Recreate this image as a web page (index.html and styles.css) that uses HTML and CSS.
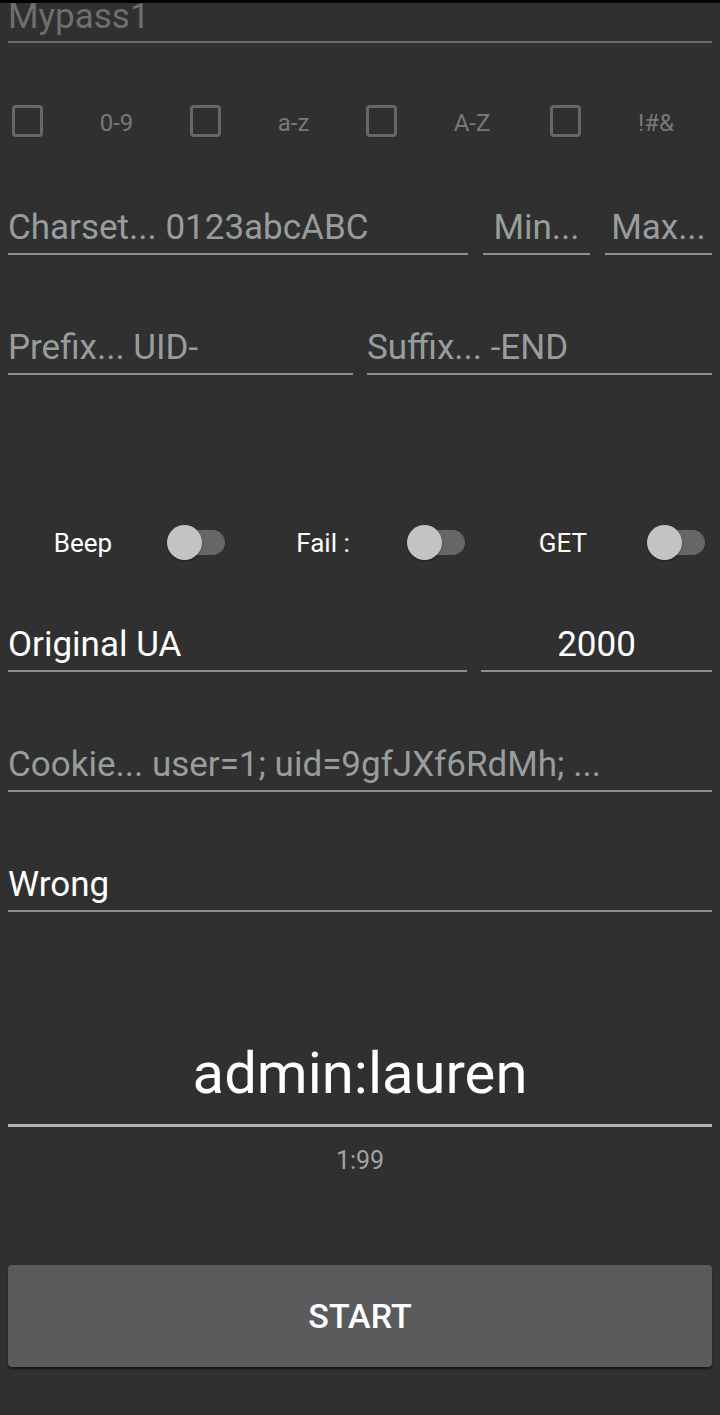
FILE: index.html
```html
<!DOCTYPE html>
<html lang="en">
<head>
<meta charset="utf-8">
<title>Brute form</title>
<link rel="stylesheet" href="styles.css">
</head>
<body>
<div class="topbar"></div>
<main class="form">
  <div class="field field--disabled field--first">Mypass1</div>

  <div class="checks">
    <div class="check"><span class="box"></span><span class="check-label">0-9</span></div>
    <div class="check"><span class="box"></span><span class="check-label">a-z</span></div>
    <div class="check"><span class="box"></span><span class="check-label">A-Z</span></div>
    <div class="check"><span class="box"></span><span class="check-label">!#&amp;</span></div>
  </div>

  <div class="row row--charset">
    <div class="field hint">Charset... 0123abcABC</div>
    <div class="field hint center">Min...</div>
    <div class="field hint center">Max...</div>
  </div>

  <div class="row row--half">
    <div class="field hint">Prefix... UID-</div>
    <div class="field hint">Suffix... -END</div>
  </div>

  <div class="switches">
    <div class="sw-cell"><span class="sw-label">Beep</span><span class="switch"><span class="track"></span><span class="thumb"></span></span></div>
    <div class="sw-cell"><span class="sw-label">Fail :</span><span class="switch"><span class="track"></span><span class="thumb"></span></span></div>
    <div class="sw-cell"><span class="sw-label">GET</span><span class="switch"><span class="track"></span><span class="thumb"></span></span></div>
  </div>

  <div class="row row--ua">
    <div class="field">Original UA</div>
    <div class="field center">2000</div>
  </div>

  <div class="field hint field--cookie">Cookie... user=1; uid=9gfJXf6RdMh; ...</div>

  <div class="field field--wrong">Wrong</div>

  <div class="result">admin:lauren</div>
  <div class="timer">1:99</div>

  <button class="start" type="button">START</button>
</main>
</body>
</html>
```

FILE: styles.css
```css
html, body {
  margin: 0;
  padding: 0;
  background: #303030;
}

body {
  font-family: Roboto, "Noto Sans", "Liberation Sans", sans-serif;
  color: #ffffff;
  min-height: 1415px;
}

.topbar {
  height: 3px;
  background: #000000;
}

.form {
  padding: 0 8px;
  display: flex;
  flex-direction: column;
}

.field {
  font-size: 35px;
  line-height: 39px;
  padding-bottom: 6px;
  border-bottom: 2px solid #8e8e8e;
  white-space: nowrap;
  overflow: hidden;
  color: #ffffff;
}

.hint {
  color: #979d9d;
}

.center {
  text-align: center;
}

.field--disabled {
  color: #6e6e6e;
  border-bottom-color: #6c6c6c;
}

.field--first {
  line-height: 27px;
  padding-bottom: 11px;
  overflow: visible;
}

/* checkboxes */
.checks {
  margin: 62px -8px 0;
  padding-left: 12px;
  display: grid;
  grid-template-columns: 178px 176px 184px 1fr;
  height: 32px;
}

.check {
  display: flex;
  align-items: flex-start;
}

.box {
  box-sizing: border-box;
  width: 31px;
  height: 32px;
  border: 3px solid #676767;
  border-radius: 4px;
  flex: none;
}

.check-label {
  width: 150px;
  text-align: center;
  font-size: 24px;
  line-height: 32px;
  padding-top: 2px;
  color: #787878;
}

/* rows */
.row {
  display: grid;
}

.row--charset {
  margin-top: 71px;
  grid-template-columns: 460px 107px 107px;
  column-gap: 15px;
}

.row--half {
  margin-top: 73px;
  grid-template-columns: 1fr 1fr;
  column-gap: 14px;
}

/* switches */
.switches {
  margin: 146.5px -8px 0;
  display: grid;
  grid-template-columns: 240px 240px 240px;
  height: 40px;
}

.sw-cell {
  display: flex;
  align-items: center;
}

.sw-label {
  width: 166px;
  text-align: center;
  font-size: 26px;
  line-height: 40px;
  padding-top: 1px;
  align-self: flex-start;
  color: #ffffff;
}

.switch {
  position: relative;
  width: 58px;
  height: 35px;
  margin-left: 1px;
  flex: none;
}

.track {
  position: absolute;
  left: 8px;
  right: 0;
  top: 5px;
  height: 25px;
  border-radius: 13px;
  background: #666666;
}

.thumb {
  position: absolute;
  left: 0;
  top: 0;
  width: 35px;
  height: 35px;
  border-radius: 50%;
  background: #c1c4c1;
  box-shadow: 0 1px 2px rgba(0, 0, 0, 0.35);
}

.row--ua {
  margin-top: 63.5px;
  grid-template-columns: 459px 1fr;
  column-gap: 14px;
}

.field--cookie {
  margin-top: 73px;
}

.field--wrong {
  margin-top: 73px;
}

.result {
  margin-top: 128px;
  font-size: 58px;
  line-height: 67px;
  padding-bottom: 17px;
  border-bottom: 3px solid #aeb4b4;
  text-align: center;
  color: #ffffff;
}

.timer {
  margin-top: 18.5px;
  font-size: 25px;
  line-height: 30px;
  text-align: center;
  color: #a2a2a2;
}

.start {
  margin-top: 89.5px;
  height: 102px;
  width: 100%;
  border: none;
  border-radius: 4px;
  background: #5b5b5d;
  box-shadow: 0 2px 2px rgba(0, 0, 0, 0.55);
  color: #ffffff;
  font-family: Roboto, "Noto Sans", "Liberation Sans", sans-serif;
  font-size: 34px;
  font-weight: 500;
  padding: 0;
}
```
